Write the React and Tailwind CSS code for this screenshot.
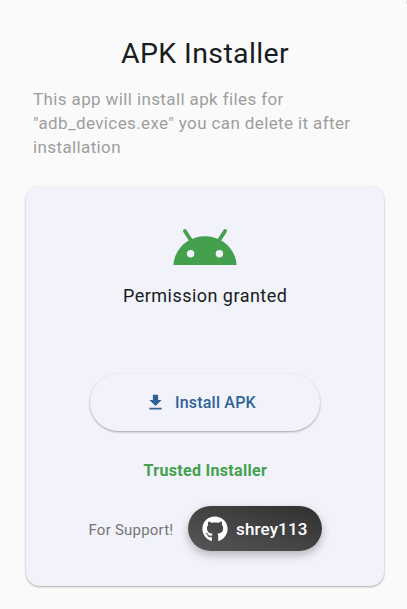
import { FaGithub } from 'react-icons/fa';

function AndroidHead() {
  return (
    <svg className="block h-[38px] w-[64px]" viewBox="0 0 64 38" fill="#45a04e">
      <path d="M0.4 37 C1.6 20.5 15 8.3 32 8.3 S62.4 20.5 63.6 37 Z" />
      <path d="M11.9 2.9 L19 14 M52.1 2.9 L45 14" stroke="#45a04e" strokeWidth="3.8" strokeLinecap="round" />
      <circle cx="17.6" cy="25.7" r="3.7" fill="#f1f2fa" />
      <circle cx="46.4" cy="25.7" r="3.7" fill="#f1f2fa" />
    </svg>
  );
}

function DownloadIcon() {
  return (
    <svg className="block size-[21px]" viewBox="0 0 24 24" fill="#316296">
      <path d="M19 9h-4V3H9v6H5l7 7 7-7zM5 18v2h14v-2H5z" />
    </svg>
  );
}

export default function App() {
  return (
    <main className="relative flex h-[609px] w-[407px] flex-col overflow-hidden bg-[#fafafa] pt-[36px] font-['Roboto',sans-serif]">
      <span className="absolute top-0 right-0 h-[4px] w-px bg-[#e2e2e2]" />
      <h1 className="ml-[121px] whitespace-nowrap text-[28.5px] leading-9 tracking-[0.38px] text-[#191c20]">APK Installer</h1>
      <p className="mt-[14.5px] ml-[33px] whitespace-nowrap text-[17px] leading-6 tracking-[0.38px] text-[#9e9e9e]">
        This app will install apk files for<br />
        "adb_devices.exe" you can delete it after<br />
        installation
      </p>
      <section className="mt-[27.5px] ml-[26px] flex h-[399.5px] w-[358px] flex-col rounded-[14px] bg-[#f1f2fa] shadow-[0_1px_2px_rgba(0,0,0,0.24),0_1px_3px_rgba(0,0,0,0.1)]">
        <div className="mt-[42px] ml-[147px]">
          <AndroidHead />
        </div>
        <p className="mt-[18px] ml-[97px] whitespace-nowrap text-[18px] leading-6 tracking-[0.47px] text-[#191c20]">Permission granted</p>
        <button className="mt-[65.5px] ml-[64px] flex h-[57px] w-[230px] items-center rounded-full bg-[#f2f3fa] pl-[55px] shadow-[0_1px_2px_rgba(0,0,0,0.24),0_1px_3px_rgba(0,0,0,0.1)]">
          <DownloadIcon />
          <span className="ml-[9px] whitespace-nowrap pt-px text-[16px] font-medium leading-6 tracking-[0.2px] text-[#316296]">Install APK</span>
        </button>
        <p className="mt-[28px] ml-[117.5px] whitespace-nowrap text-[16px] font-bold leading-6 tracking-[0.32px] text-[#45a04e]">Trusted Installer</p>
        <div className="mt-[23.5px] ml-[62px] flex items-center">
          <span className="w-[99.5px] whitespace-nowrap pt-[2px] pl-[0.5px] text-[15px] leading-6 tracking-[0.22px] text-[#757575]">For Support!</span>
          <button className="flex h-[45px] w-[134px] items-center rounded-full bg-linear-to-tr from-[#575757] to-[#303030] pl-[14px] shadow-[0_4px_10px_rgba(0,0,0,0.25)]">
            <FaGithub className="size-[26px] text-white" />
            <span className="ml-[8.5px] whitespace-nowrap pt-px text-[17px] font-medium leading-6 tracking-[0.15px] text-white">shrey113</span>
          </button>
        </div>
      </section>
    </main>
  );
}
